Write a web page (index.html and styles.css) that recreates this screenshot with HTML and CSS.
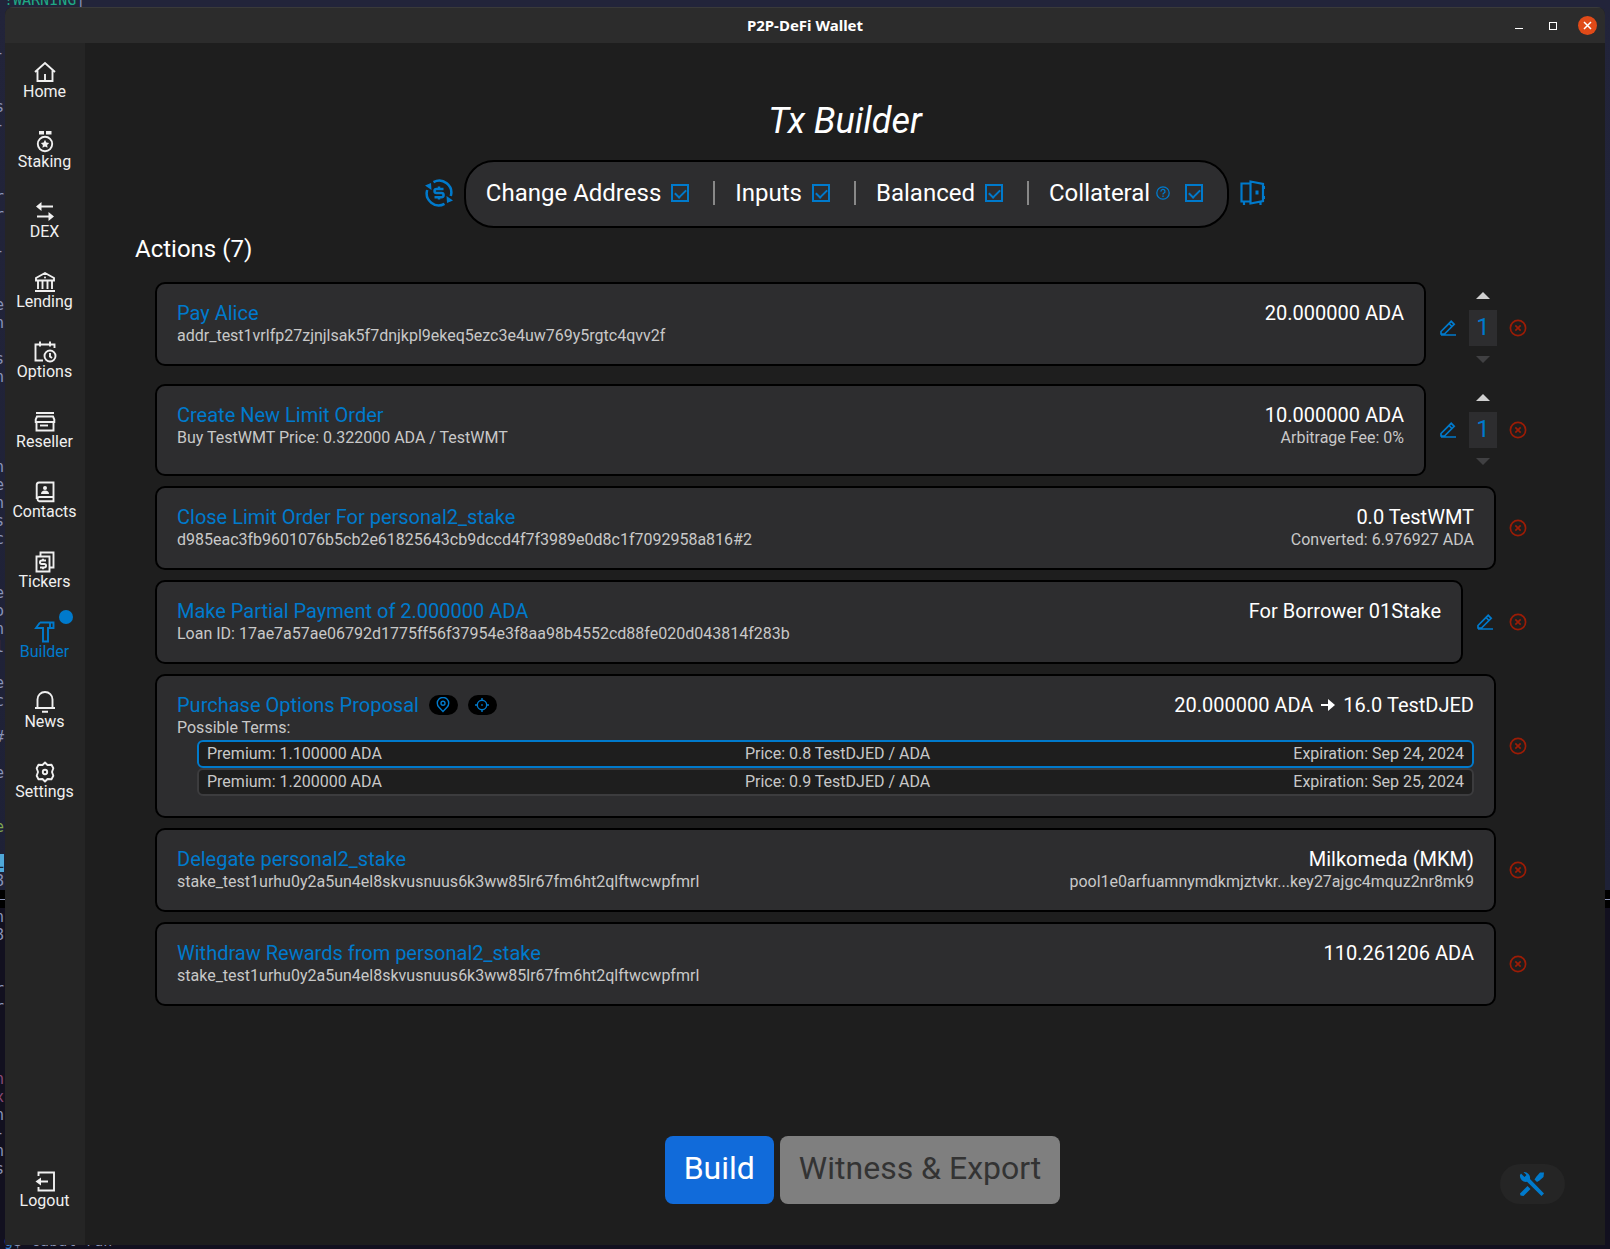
FILE: index.html
```
<!DOCTYPE html>
<html lang="en">
<head>
<meta charset="utf-8">
<title>P2P-DeFi Wallet</title>
<link rel="stylesheet" href="styles.css">
</head>
<body>
<svg class="sprite" aria-hidden="true">
  <symbol id="i-edit" viewBox="0 0 16 16"><path d="M1 11.5 11.2 1.3 14.2 4.3 4.5 14H1ZM9 3.5 12 6.500M1 15H16" /></symbol>
  <symbol id="i-delete" viewBox="0 0 18 18"><circle cx="9" cy="9" r="7.6"/><path d="M6.300 6.300 11.700 11.700M11.700 6.300 6.300 11.700"/></symbol>
</svg>

<div class="terminal-line terminal-first" aria-hidden="true"><span class="tl-green">!WARNING</span>|</div>
<div class="terminal-status" aria-hidden="true"></div>
<pre class="terminal-edge" aria-hidden="true">

-


s
-



r
r

-


e
n

s
n




n
e
n
s
c


e
o
n
l

e
c

#

e


<i class="tl-lime">e</i>

<i class="tl-mark">L</i>
8

n
8


r
r



<i class="tl-pink">n</i>
<i class="tl-pink">x</i>
n
-
n
s</pre>
<div class="terminal-line terminal-last" aria-hidden="true"><span class="tl-blue">g</span>$ cabal run</div>

<div class="window">
  <header class="titlebar">
    <h1 class="titlebar-text">P2P-DeFi Wallet</h1>
    <div class="controls">
      <button class="control" aria-label="Minimize"><svg width="10" height="20"><path d="M1 12.500H9" stroke="#fff" stroke-width="1"/></svg></button>
      <button class="control" aria-label="Maximize"><svg width="10" height="20"><rect x="1.500" y="6.500" width="7" height="7" fill="none" stroke="#fff"/></svg></button>
      <button class="control control-close" aria-label="Close"><svg width="19" height="19"><circle cx="9.500" cy="9.500" r="9.500" fill="#e04a18"/><path d="M6 6 13 13M13 6 6 13" stroke="#fff" stroke-width="1.500"/></svg></button>
    </div>
  </header>

  <div class="body">
    <nav class="sidebar">
      <a class="nav-item" href="#home"><svg class="nav-icon" viewBox="0 0 24 24"><path d="M2 12 12 3 22 12M4.500 10.500V21H19.500V10.500M12 14V21"/></svg>Home</a>
      <a class="nav-item" href="#staking"><svg class="nav-icon" viewBox="0 0 24 24"><path class="solid" d="M6 1H11V4.500H6ZM13 1H18.500V4.500H13ZM12 9.800 13.300 12.500 16.200 12.900 14.100 14.900 14.600 17.800 12 16.400 9.400 17.800 9.900 14.900 7.800 12.900 10.700 12.500Z"/><circle cx="12" cy="14" r="7.200"/></svg>Staking</a>
      <a class="nav-item" href="#dex"><svg class="nav-icon" viewBox="0 0 24 24"><path d="M6 6.500H20M4 16.500H18"/><path class="solid" d="M3 6.500 8.500 2V11ZM21 16.500 15.500 12V21Z"/></svg>DEX</a>
      <a class="nav-item" href="#lending"><svg class="nav-icon" viewBox="0 0 24 24"><path d="M3 10.500V8L12 3 21 8V10.500ZM5 11V19M9.500 11V19M14.500 11V19M19 11V19M2 21H22"/><circle class="solid" cx="12" cy="7.500" r="1"/></svg>Lending</a>
      <a class="nav-item" href="#options"><svg class="nav-icon" viewBox="0 0 24 24"><path d="M10 20.500H2.500V4.500H21.500V8M7 1.500V6.500M17 1.500V6.500"/><circle cx="17" cy="16" r="5.500"/><path d="M17 13V16.500L19 18"/></svg>Options</a>
      <a class="nav-item" href="#reseller"><svg class="nav-icon" viewBox="0 0 24 24"><path d="M3 3H21M3.500 12V20.500H20.500V12M4 6.500H20L21.300 9.500V12H2.700V9.500Z"/><path d="M7 15.500H15"/></svg>Reseller</a>
      <a class="nav-item" href="#contacts"><svg class="nav-icon" viewBox="0 0 24 24"><path d="M20.500 17H6A2.200 2.200 0 0 0 6 21.200H20.500V2.500H6A2.500 2.500 0 0 0 3.700 5V19"/><circle class="solid" cx="12" cy="8" r="2"/><path class="solid" d="M8 14A4 3.500 0 0 1 16 14Z"/></svg>Contacts</a>
      <a class="nav-item" href="#tickers"><svg class="nav-icon" viewBox="0 0 24 24"><path d="M7.500 6V2.500H20.500V17.500H17M3.500 6.500H16.500V21.500H3.500Z"/><path d="M13 10.500H8.700A1.700 1.700 0 0 0 8.700 14H11.300A1.700 1.700 0 0 1 11.300 17.500H7M10 8.800V10.500M10 17.500V19.200"/></svg>Tickers</a>
      <a class="nav-item active" href="#builder"><span class="nav-badge"></span><svg class="nav-icon" viewBox="0 0 24 24"><path d="M7 2.500H20.500V8H15V21.500H10V8H3L7 2.500M17 2.500V8"/></svg>Builder</a>
      <a class="nav-item" href="#news"><svg class="nav-icon" viewBox="0 0 24 24"><path d="M4.500 18V9.500A7.500 7.500 0 0 1 19.500 9.500V18M2 18H22M9 21.700H15"/></svg>News</a>
      <a class="nav-item" href="#settings"><svg class="nav-icon" viewBox="0 0 24 24"><path d="M9.500 5 12 2.500 14.500 5 18.500 4.800 20.300 8.200 19 12 20.300 15.800 18.500 19.200 14.500 19 12 21.500 9.500 19 5.500 19.200 3.700 15.800 5 12 3.700 8.200 5.500 4.800Z" stroke-linejoin="round"/><circle cx="12" cy="12" r="2.200"/></svg>Settings</a>
      <a class="nav-item nav-last" href="#logout"><svg class="nav-icon" viewBox="0 0 24 24"><path d="M5.500 7V3.500H21V21.500H5.500V18M6 12.500H15"/><path class="solid" d="M2.500 12.500 8 8.500V16.500Z"/></svg>Logout</a>
    </nav>

    <main class="main">
      <h2 class="page-title">Tx Builder</h2>

      <div class="toolbar">
        <button class="icon-button" aria-label="Change address"><svg width="28" height="28" viewBox="0 0 28 28" fill="none" stroke="#007acc" stroke-width="2.500"><path d="M8.500 3.200A12 12 0 0 1 25.800 17M19.500 24.800A12 12 0 0 1 2.200 11"/><path fill="#007acc" stroke="none" d="M0 6.500 6 4 6.500 11ZM28 21.500 22 24 21.500 17Z"/><path d="M18.500 10H11.500A2 2 0 0 0 11.500 14H16.500A2 2 0 0 1 16.500 18.200H9.500M14 7.500V10M14 18V20.500"/></svg></button>
        <div class="checks">
          <label class="check">Change Address<input type="checkbox" checked></label>
          <label class="check">Inputs<input type="checkbox" checked></label>
          <label class="check">Balanced<input type="checkbox" checked></label>
          <label class="check">Collateral<svg class="help" viewBox="0 0 14 14"><circle cx="7" cy="7" r="6.200"/><path d="M5 5.600A2 2 0 1 1 7.800 7.200Q7 7.500 7 8.500M7 9.600V11"/></svg><input type="checkbox" checked></label>
        </div>
        <button class="icon-button" aria-label="Collateral vault"><svg width="25" height="26" viewBox="0 0 25 26" fill="none" stroke="#007acc" stroke-width="2.200"><path d="M10 3.500H1.500V21.500H10M10.500 1.500 23 4V21L10.500 23.500ZM4 22V25M20.500 22V25M24 6V9M24 16V19"/><path d="M17 10.500V14.500" stroke-width="3"/></svg></button>
      </div>

      <h3 class="section-title">Actions (7)</h3>

      <div class="list">
        <div class="row">
          <section class="card card-top">
            <div class="card-line"><h4 class="name">Pay Alice</h4><span class="value">20.000000 ADA</span></div>
            <div class="card-line sub"><span>addr_test1vrlfp27zjnjlsak5f7dnjkpl9ekeq5ezc3e4uw769y5rgtc4qvv2f</span></div>
          </section>
          <div class="tools">
            <button class="tool edit" aria-label="Edit"><svg width="16" height="16"><use href="#i-edit"/></svg></button>
            <div class="stepper">
              <button class="step" aria-label="Increase"><svg width="14" height="7"><path d="M0 7 7 0 14 7Z"/></svg></button>
              <input class="count" type="text" value="1" aria-label="Count">
              <button class="step" aria-label="Decrease" disabled><svg width="14" height="7"><path d="M0 0 7 7 14 0Z"/></svg></button>
            </div>
            <button class="tool delete" aria-label="Remove"><svg width="18" height="18"><use href="#i-delete"/></svg></button>
          </div>
        </div>

        <div class="row">
          <section class="card">
            <div class="card-line"><h4 class="name">Create New Limit Order</h4><span class="value">10.000000 ADA</span></div>
            <div class="card-line sub"><span>Buy TestWMT Price: 0.322000 ADA / TestWMT</span><span>Arbitrage Fee: 0%</span></div>
          </section>
          <div class="tools">
            <button class="tool edit" aria-label="Edit"><svg width="16" height="16"><use href="#i-edit"/></svg></button>
            <div class="stepper">
              <button class="step" aria-label="Increase"><svg width="14" height="7"><path d="M0 7 7 0 14 7Z"/></svg></button>
              <input class="count" type="text" value="1" aria-label="Count">
              <button class="step" aria-label="Decrease" disabled><svg width="14" height="7"><path d="M0 0 7 7 14 0Z"/></svg></button>
            </div>
            <button class="tool delete" aria-label="Remove"><svg width="18" height="18"><use href="#i-delete"/></svg></button>
          </div>
        </div>

        <div class="row">
          <section class="card">
            <div class="card-line"><h4 class="name">Close Limit Order For personal2_stake</h4><span class="value">0.0 TestWMT</span></div>
            <div class="card-line sub"><span>d985eac3fb9601076b5cb2e61825643cb9dccd4f7f3989e0d8c1f7092958a816#2</span><span>Converted: 6.976927 ADA</span></div>
          </section>
          <div class="tools">
            <button class="tool delete" aria-label="Remove"><svg width="18" height="18"><use href="#i-delete"/></svg></button>
          </div>
        </div>

        <div class="row">
          <section class="card">
            <div class="card-line"><h4 class="name">Make Partial Payment of 2.000000 ADA</h4><span class="value">For Borrower 01Stake</span></div>
            <div class="card-line sub"><span>Loan ID: 17ae7a57ae06792d1775ff56f37954e3f8aa98b4552cd88fe020d043814f283b</span></div>
          </section>
          <div class="tools">
            <button class="tool edit" aria-label="Edit"><svg width="16" height="16"><use href="#i-edit"/></svg></button>
            <button class="tool delete" aria-label="Remove"><svg width="18" height="18"><use href="#i-delete"/></svg></button>
          </div>
        </div>

        <div class="row">
          <section class="card">
            <div class="card-line">
              <div class="name-group">
                <h4 class="name">Purchase Options Proposal</h4>
                <button class="chip" aria-label="Payment address"><svg width="16" height="16" viewBox="0 0 16 16"><path d="M8 14.500 3.800 10A5.700 5.700 0 1 1 12.200 10Z"/><circle cx="8" cy="6.300" r="2"/></svg></button>
                <button class="chip" aria-label="Target"><svg width="16" height="16" viewBox="0 0 16 16"><circle cx="8" cy="8" r="4.700"/><path d="M8 1V4M8 12V15M1 8H4M12 8H15M7.200 8H8.800"/></svg></button>
              </div>
              <span class="value">20.000000 ADA<svg class="arrow" width="14" height="14" viewBox="0 0 14 14"><path d="M0 7H9" stroke="#fff" stroke-width="2"/><path d="M7 1 14 7 7 13Z" fill="#fff"/></svg>16.0 TestDJED</span>
            </div>
            <div class="card-line sub"><span>Possible Terms:</span></div>
            <div class="terms">
              <div class="term selected"><span>Premium: 1.100000 ADA</span><span>Price: 0.8 TestDJED / ADA</span><span>Expiration: Sep 24, 2024</span></div>
              <div class="term"><span>Premium: 1.200000 ADA</span><span>Price: 0.9 TestDJED / ADA</span><span>Expiration: Sep 25, 2024</span></div>
            </div>
          </section>
          <div class="tools">
            <button class="tool delete" aria-label="Remove"><svg width="18" height="18"><use href="#i-delete"/></svg></button>
          </div>
        </div>

        <div class="row">
          <section class="card">
            <div class="card-line"><h4 class="name">Delegate personal2_stake</h4><span class="value">Milkomeda (MKM)</span></div>
            <div class="card-line sub"><span>stake_test1urhu0y2a5un4el8skvusnuus6k3ww85lr67fm6ht2qlftwcwpfmrl</span><span>pool1e0arfuamnymdkmjztvkr...key27ajgc4mquz2nr8mk9</span></div>
          </section>
          <div class="tools">
            <button class="tool delete" aria-label="Remove"><svg width="18" height="18"><use href="#i-delete"/></svg></button>
          </div>
        </div>

        <div class="row">
          <section class="card">
            <div class="card-line"><h4 class="name">Withdraw Rewards from personal2_stake</h4><span class="value">110.261206 ADA</span></div>
            <div class="card-line sub"><span>stake_test1urhu0y2a5un4el8skvusnuus6k3ww85lr67fm6ht2qlftwcwpfmrl</span></div>
          </section>
          <div class="tools">
            <button class="tool delete" aria-label="Remove"><svg width="18" height="18"><use href="#i-delete"/></svg></button>
          </div>
        </div>
      </div>

      <footer class="footer">
        <div class="footer-actions">
          <button class="action primary">Build</button>
          <button class="action" disabled>Witness &amp; Export</button>
        </div>
        <button class="wrench" aria-label="Tools"><svg width="26" height="26" viewBox="0 0 26 26"><path d="M2 2.500 5.500 6 7.500 4 4.500 1A6 6 0 0 1 11 8L25 22.500 22.500 25 8 10.800A6 6 0 0 1 1 4ZM21 1.500 25 1.500 24.500 6 20.500 9.500 18 11 15.500 8.500 17.500 5.500ZM8.500 15 11.500 18 4.500 25 1.500 24.500 1 22.500Z" fill="#007acc"/></svg></button>
      </footer>
    </main>
  </div>
</div>
</body>
</html>
```
FILE: styles.css
```
* { box-sizing: border-box; }

body {
  margin: 0;
  min-height: 100vh;
  display: flex;
  padding: 7px 5px 4px;
  background: linear-gradient(#22243a 0, #1e2136 890px, #12101f 908px);
  font-family: Roboto, "Liberation Sans", sans-serif;
  font-size: 16px;
  color: #fff;
  position: relative;
  overflow: hidden;
}

h1, h2, h3, h4 { margin: 0; font-weight: 400; }
button { border: 0; padding: 0; background: none; font: inherit; color: inherit; }
.sprite { position: absolute; width: 0; height: 0; }

/* Terminal showing round the edges of the window */
.terminal-line,
.terminal-edge {
  position: absolute;
  margin: 0;
  font: 15px/18px "DejaVu Sans Mono", monospace;
  color: #8a94b8;
  white-space: pre;
}
.terminal-first { top: -9px; left: 4px; }
.terminal-last { bottom: -1px; left: 4px; }
.terminal-edge { top: 26px; left: -5px; width: 10px; overflow: hidden; }
.terminal-edge i { font-style: normal; }
.terminal-status { position: absolute; top: 890px; left: 0; right: 0; height: 18px; background: linear-gradient(#000 9px, #8a94b8 9px, #8a94b8 10px, #000 10px); }
.tl-green { color: #1fa884; }
.tl-lime { color: #7fa650; }
.tl-blue { color: #3a7fc8; }
.tl-pink { color: #8a4a78; }
.tl-mark { background: #4fa8d8; color: #112233; }

.window {
  position: relative;
  flex: 1;
  display: flex;
  flex-direction: column;
  border-radius: 8px 8px 0 0;
  background: #1e1e1e;
  overflow: hidden;
}

.titlebar {
  display: grid;
  grid-template-columns: 1fr auto 1fr;
  align-items: center;
  height: 36px;
  padding: 0 8px;
  background: #2c2c2c;
  border-top: 1px solid #3a3a3a;
}
.titlebar-text { grid-column: 2; padding-bottom: 2px; font: 700 15px/20px "Noto Sans", sans-serif; }
.controls { display: flex; justify-content: flex-end; align-items: center; gap: 24px; }
.control { display: flex; }
.control-close { margin-left: -4px; }

.body { flex: 1; display: flex; }

.sidebar {
  width: 80px;
  display: flex;
  flex-direction: column;
  padding: 2px 0 21px;
  background: #252525;
}
.nav-item {
  position: relative;
  height: 70px;
  padding: 15px 1px 0 0;
  display: flex;
  flex-direction: column;
  align-items: center;
  line-height: 16px;
  color: #f0f0f0;
  text-decoration: none;
}
.nav-icon { width: 24px; height: 24px; fill: none; stroke: currentColor; stroke-width: 1.9; }
.nav-icon .solid { fill: currentColor; stroke: none; }
.nav-last { margin-top: auto; }
.active { color: #007acc; }
.nav-badge { position: absolute; top: 5px; right: 12px; width: 14px; height: 14px; border-radius: 50%; background: #007acc; }

.main {
  flex: 1;
  min-width: 0;
  display: flex;
  flex-direction: column;
  padding: 56px 40px 41px 50px;
}
.page-title { font-size: 36px; line-height: 44px; font-style: italic; text-align: center; margin-right: 10px; }

.toolbar { display: flex; justify-content: center; align-items: center; gap: 11px; margin: 17px 10px 7px 0; }
.icon-button { display: flex; padding-bottom: 2px; }
.checks {
  display: flex;
  align-items: center;
  height: 68px;
  padding: 0 24px 2px 20px;
  border: 2px solid #000;
  border-radius: 30px;
  background: #2d2d2f;
  font-size: 24px;
}
.check { display: flex; align-items: center; gap: 10px; line-height: 24px; }
.check + .check { margin-left: 24px; padding-left: 20px; border-left: 2px solid #888; }
.help { width: 14px; height: 14px; margin: 0 5px 0 -4px; fill: none; stroke: #007acc; stroke-width: 1.3; }
.check input {
  appearance: none;
  display: flex;
  justify-content: center;
  width: 18px;
  height: 18px;
  margin: 0;
  border: 2px solid #007acc;
}
.check input:checked::before {
  content: "";
  width: 5px;
  height: 9px;
  margin-top: 1px;
  border: solid #007acc;
  border-width: 0 2px 2px 0;
  transform: rotate(45deg);
}

.section-title { font-size: 24px; line-height: 28px; }

.list { display: flex; flex-direction: column; gap: 10px; margin: 19px 32px 20px 20px; }
.row { display: flex; gap: 7px; }
.card {
  flex: 1;
  min-width: 0;
  padding: 17px 20px;
  border: 2px solid #000;
  border-radius: 10px;
  background: #2d2d2f;
}
.card-top { align-self: flex-start; }
.card-line { display: flex; justify-content: space-between; }
.name, .value { font-size: 20px; line-height: 24px; }
.name { color: #007acc; }
.name-group { display: flex; align-items: center; gap: 10px; }
.value { display: flex; align-items: center; }
.arrow { margin: 0 8px; }
.sub { line-height: 22px; color: #c8c8c8; }

.chip { display: flex; align-items: center; justify-content: center; width: 29px; height: 20px; border-radius: 10px; background: #000; }
.chip svg { fill: none; stroke: #007acc; stroke-width: 1.4; }

.terms { margin: 1px 0 3px 20px; }
.term {
  display: flex;
  justify-content: space-between;
  padding: 0 8px;
  border: 2px solid #3c3c3e;
  border-radius: 6px;
  background: #1e1e1e;
  line-height: 24px;
  color: #c8c8c8;
}
.term.selected { border-color: #007acc; }

.tools { display: flex; align-items: center; gap: 3px; }
.tool { width: 30px; height: 30px; display: flex; align-items: center; justify-content: center; }
.tool svg { fill: none; stroke-width: 1.7; }
.edit { stroke: #007acc; }
.delete { stroke: #9b1c06; }
.stepper { display: flex; flex-direction: column; width: 28px; margin: 0 3px; }
.step { display: flex; align-items: center; justify-content: center; height: 28px; padding-bottom: 2px; fill: #d0d0d0; }
.step:disabled { fill: #404042; }
.count {
  width: 28px;
  height: 36px;
  padding: 0 0 2px;
  border: 0;
  background: #2d2d2f;
  color: #007acc;
  font: 24px/34px Roboto, sans-serif;
  text-align: center;
}

.footer { display: flex; align-items: flex-end; margin-top: auto; padding-left: 90px; }
.footer-actions { flex: 1; display: flex; justify-content: center; gap: 6px; }
.action {
  height: 68px;
  padding: 0 19px 4px;
  border-radius: 8px;
  background: #7f7f7f;
  color: #333;
  font-size: 32px;
  line-height: 38px;
}
.primary { background: #116bda; color: #fff; }
.wrench { display: flex; align-items: center; justify-content: center; width: 65px; height: 40px; padding-right: 2px; border-radius: 20px; background: #252525; }
```
